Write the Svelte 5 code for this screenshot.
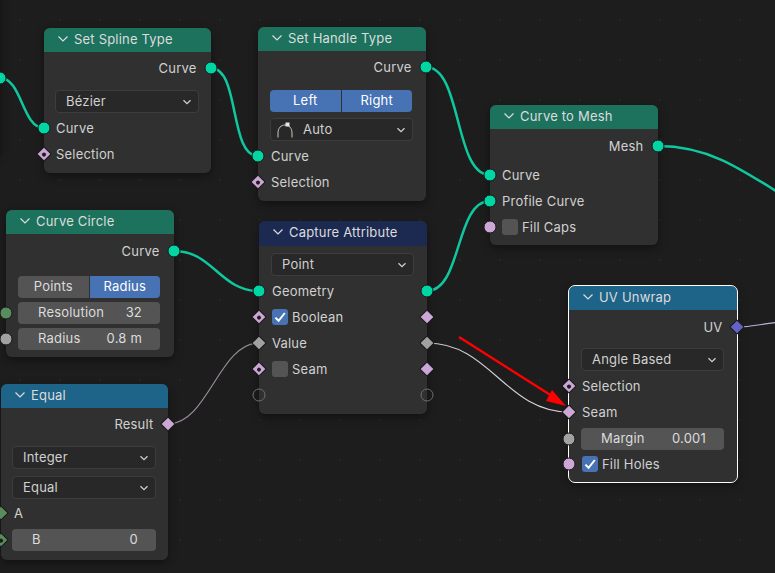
{#snippet sock(kind, side)}
	<span class="sock {kind} {side}"></span>
{/snippet}
{#snippet head(title)}
	<div class="hdr">
		<svg class="chev" viewBox="0 0 12 8"><path d="M1.5 1.5 L6 6 L10.5 1.5" /></svg>
		<span>{title}</span>
	</div>
{/snippet}
{#snippet drop(label)}
	<div class="drop">
		<span>{label}</span>
		<svg class="dchev" viewBox="0 0 10 6"><path d="M1.5 1.2 L5 4.6 L8.5 1.2" /></svg>
	</div>
{/snippet}
{#snippet tick()}
	<span class="check on"><svg viewBox="0 0 16 16"><path d="M3.4 8.6 L6.6 11.8 L12.8 4" /></svg></span>
{/snippet}

<div class="canvas">
	<svg class="wires" viewBox="0 0 775 573">
		<defs>
			<linearGradient id="g1" gradientUnits="userSpaceOnUse" x1="168" y1="424" x2="259" y2="343">
				<stop offset="0" stop-color="#a88eb0" />
				<stop offset="1" stop-color="#8a8a8a" />
			</linearGradient>
			<linearGradient id="g2" gradientUnits="userSpaceOnUse" x1="427" y1="343" x2="569" y2="412">
				<stop offset="0" stop-color="#c8c8c8" />
				<stop offset="1" stop-color="#d8d0dc" />
			</linearGradient>
		</defs>
		<g class="teal">
			<path d="M0 78 C 22 78, 22 128, 44 128" />
			<path d="M211 68 C 240 68, 229 156, 258 156" />
			<path d="M426 67 C 462 67, 454 175, 490 175" />
			<path d="M174 251 C 213 251, 220 291, 259 291" />
			<path d="M427 291 C 462 291, 455 201, 490 201" />
			<path d="M658 146 C 708 146, 740 168, 790 200" />
		</g>
		<path class="thin" stroke="url(#g1)" d="M168 424 C 208 424, 219 343, 259 343" />
		<path class="thin" stroke="url(#g2)" d="M427 343 C 490 343, 506 412, 569 412" />
		<path class="thin" stroke="#b8b4dc" d="M737 327 C 750 327, 762 324, 780 322" />
	</svg>

	<div class="node off">
		<div class="offspace"></div>
		<div class="row">{@render sock('geo', 'r')}</div>
	</div>

	<div class="node spline">
		{@render head('Set Spline Type')}
		<div class="body tight">
			<div class="row out">Curve{@render sock('geo', 'r')}</div>
			<div class="space9"></div>
			{@render drop('Bézier')}
			<div class="space2"></div>
			<div class="row">{@render sock('geo', 'l')}Curve</div>
			<div class="row">{@render sock('dia dot', 'l')}Selection</div>
		</div>
	</div>

	<div class="node handle">
		{@render head('Set Handle Type')}
		<div class="body tight">
			<div class="row out">Curve{@render sock('geo', 'r')}</div>
			<div class="space10"></div>
			<div class="seg">
				<span class="blue">Left</span>
				<span class="blue">Right</span>
			</div>
			<div class="space6"></div>
			<div class="drop">
				<svg class="auto" viewBox="0 0 18 16"><path d="M2 15.5 V11 C2 6 5 3 9 3 C13 3 16 6 16 11 V15.5" /><rect x="9.5" y="0.5" width="4" height="4" /></svg>
				<span>Auto</span>
				<svg class="dchev" viewBox="0 0 10 6"><path d="M1.5 1.2 L5 4.6 L8.5 1.2" /></svg>
			</div>
			<div class="space2"></div>
			<div class="row">{@render sock('geo', 'l')}Curve</div>
			<div class="row">{@render sock('dia dot', 'l')}Selection</div>
		</div>
	</div>

	<div class="node circle">
		{@render head('Curve Circle')}
		<div class="body">
			<div class="row out">Curve{@render sock('geo', 'r')}</div>
			<div class="space12"></div>
			<div class="seg">
				<span class="grey">Points</span>
				<span class="blue">Radius</span>
			</div>
			<div class="space4"></div>
			<div class="num">{@render sock('int', 'wl')}<span>Resolution</span><span>32</span></div>
			<div class="space4"></div>
			<div class="num">{@render sock('val', 'wl')}<span>Radius</span><span>0.8 m</span></div>
		</div>
	</div>

	<div class="node capture">
		{@render head('Capture Attribute')}
		<div class="body top7">
			{@render drop('Point')}
			<div class="space2"></div>
			<div class="row">{@render sock('geo', 'l')}Geometry{@render sock('geo', 'r')}</div>
			<div class="row">{@render sock('dia dot', 'l')}<span class="check on"><svg viewBox="0 0 16 16"><path d="M3.4 8.6 L6.6 11.8 L12.8 4" /></svg></span>Boolean{@render sock('dia', 'r')}</div>
			<div class="row">{@render sock('grey', 'l')}Value{@render sock('grey', 'r')}</div>
			<div class="row">{@render sock('dia dot', 'l')}<span class="check"></span>Seam{@render sock('dia', 'r')}</div>
			<div class="row">{@render sock('ring', 'l')}{@render sock('ring', 'r')}</div>
		</div>
	</div>

	<div class="node mesh">
		{@render head('Curve to Mesh')}
		<div class="body">
			<div class="row out">Mesh{@render sock('geo', 'r')}</div>
			<div class="space3"></div>
			<div class="row">{@render sock('geo', 'l')}Curve</div>
			<div class="row">{@render sock('geo', 'l')}Profile Curve</div>
			<div class="row">{@render sock('bool', 'l')}<span class="check"></span>Fill Caps</div>
		</div>
	</div>

	<div class="node uv">
		{@render head('UV Unwrap')}
		<div class="body">
			<div class="row out">UV{@render sock('vec', 'r')}</div>
			<div class="space8"></div>
			{@render drop('Angle Based')}
			<div class="space2"></div>
			<div class="row">{@render sock('dia dot', 'l')}Selection</div>
			<div class="row">{@render sock('dia', 'l')}Seam</div>
			<div class="space3"></div>
			<div class="num">{@render sock('val', 'wl')}<span>Margin</span><span>0.001</span></div>
			<div class="space1"></div>
			<div class="row">{@render sock('bool', 'l')}{@render tick()}Fill Holes</div>
		</div>
	</div>

	<div class="node equal">
		{@render head('Equal')}
		<div class="body tight">
			<div class="row out">Result{@render sock('dia', 'r')}</div>
			<div class="space9"></div>
			{@render drop('Integer')}
			<div class="space7"></div>
			{@render drop('Equal')}
			<div class="space1"></div>
			<div class="row">{@render sock('idia', 'l')}A</div>
			<div class="space3"></div>
			<div class="num">{@render sock('idia dot', 'wl')}<span>B</span><span>0</span></div>
		</div>
	</div>

	<svg class="arrow" viewBox="0 0 775 573">
		<path class="shaft" d="M459 337 L552 396" />
		<path class="headp" d="M566 406 L552 390 L546 401 Z" />
	</svg>
</div>

<style>
	:global(body) {
		margin: 0;
		background: #1d1d1d;
	}
	.canvas {
		position: relative;
		width: 775px;
		height: 573px;
		overflow: hidden;
		background-color: #1d1d1d;
		background-image: radial-gradient(circle, #262626 0.8px, transparent 1px);
		background-size: 40px 40px;
		font-family: Inter, "Noto Sans", sans-serif;
		font-size: 13px;
		letter-spacing: 0.2px;
		color: #d0d0d0;
	}
	.wires, .arrow {
		position: absolute;
		left: 0;
		top: 0;
		width: 775px;
		height: 573px;
		fill: none;
	}
	.wires { z-index: 0; }
	.arrow { z-index: 5; }
	.teal path {
		stroke: #0fc89f;
		stroke-width: 2.5;
		fill: none;
	}
	.thin { stroke-width: 1.15; fill: none; }
	.shaft { stroke: #f00; stroke-width: 2.4; }
	.headp { fill: #f00; }

	.node {
		position: absolute;
		z-index: 1;
		width: 168px;
		background: #303030;
		border-radius: 6px;
		box-shadow: 0 3px 8px rgba(0, 0, 0, 0.4);
	}
	.off { left: -168px; top: -20px; height: 175px; }
	.offspace { height: 85px; }
	.spline { left: 44px; top: 28px; width: 167px; height: 145px; }
	.handle { left: 258px; top: 27px; height: 174px; }
	.circle { left: 6px; top: 210px; height: 147px; }
	.capture { left: 259px; top: 221px; height: 193px; }
	.mesh { left: 490px; top: 105px; height: 140px; }
	.uv { left: 569px; top: 286px; height: 196px; outline: 1px solid #fff; }
	.equal { left: 1px; top: 384px; width: 167px; height: 176px; }

	.hdr {
		display: flex;
		align-items: center;
		gap: 5px;
		box-sizing: border-box;
		height: 24px;
		padding: 0 0 2px 13px;
		border-radius: 6px 6px 0 0;
		background: #1d725e;
		color: #dcdcdc;
	}
	.capture .hdr { background: #1c2a52; height: 25px; padding-bottom: 3px; }
	.uv .hdr, .equal .hdr { background: #1e6388; }
	.chev {
		width: 12px;
		height: 8px;
		fill: none;
		stroke: #dcdcdc;
		stroke-width: 1.2;
	}
	.body {
		display: flex;
		flex-direction: column;
		padding-top: 4px;
	}
	.tight { padding-top: 3px; }
	.top7 { padding-top: 7px; }
	.space1 { height: 1px; }
	.space2 { height: 2px; }
	.space3 { height: 3px; }
	.space4 { height: 4px; }
	.space6 { height: 6px; }
	.space7 { height: 7px; }
	.space8 { height: 8px; }
	.space9 { height: 9px; }
	.space10 { height: 10px; }
	.space12 { height: 12px; }

	.row {
		position: relative;
		display: flex;
		align-items: center;
		height: 26px;
		padding: 0 14.5px 0 13px;
	}
	.spline .row, .mesh .row { padding-left: 12px; }
	.out { justify-content: flex-end; }
	.check {
		flex: none;
		width: 16px;
		height: 16px;
		margin-right: 4px;
		border-radius: 3px;
		background: #545454;
	}
	.check.on { background: #4772b3; }
	.check svg {
		display: block;
		width: 16px;
		height: 16px;
		fill: none;
		stroke: #fff;
		stroke-width: 2;
	}

	.drop {
		display: flex;
		align-items: center;
		height: 23px;
		box-sizing: border-box;
		margin: 0 13px 0 12px;
		padding: 0 6px 2px 10px;
		background: #282828;
		border: 1px solid #3d3d3d;
		border-radius: 4px;
	}
	.spline .drop, .equal .drop { margin: 0 12px 0 11px; }
	.drop span { flex: 1; }
	.dchev {
		width: 10px;
		height: 6px;
		margin-top: 2px;
		fill: none;
		stroke: #d0d0d0;
		stroke-width: 1.3;
	}
	.auto {
		flex: none;
		width: 18px;
		height: 16px;
		margin: 2px 9px 0 -5px;
		fill: none;
		stroke: #c8c8c8;
		stroke-width: 1;
	}
	.auto rect { fill: #e8e8e8; stroke: none; }

	.seg {
		display: flex;
		gap: 1px;
		height: 22px;
		margin: 0 14px 0 12px;
		border-radius: 4px;
		overflow: hidden;
		text-align: center;
		line-height: 20px;
	}
	.seg span { flex: 1; }
	.blue { background: #4772b3; color: #fff; }
	.grey { background: #545454; color: #dcdcdc; }

	.num {
		position: relative;
		display: flex;
		justify-content: space-between;
		align-items: center;
		box-sizing: border-box;
		height: 22px;
		margin: 0 13px 0 12px;
		padding: 0 18px 2px 20px;
		background: #545454;
		border-radius: 4px;
		color: #dcdcdc;
	}
	.circle .num { margin-right: 14px; }
	.equal .num { margin: 0 12px 0 11px; }

	.sock {
		position: absolute;
		top: 50%;
		box-sizing: border-box;
		transform: translate(-50%, -50%);
		width: 13px;
		height: 13px;
		border-radius: 50%;
		border: 1px solid #1a1a1a;
	}
	.sock.l { left: 0; }
	.sock.r { left: 100%; }
	.sock.wl { left: -12px; top: 11px; }
	.equal .sock.wl { left: -11px; }
	.geo { background: #00d6a3; }
	.int { background: #598c5c; }
	.val { background: #a1a1a1; }
	.bool { background: #cca6d6; }
	.ring {
		background: transparent;
		border: 1.5px solid #6e6e6e;
	}
	.dia, .sock.grey, .idia, .vec {
		width: 11px;
		height: 11px;
		border-radius: 1px;
		transform: translate(-50%, -50%) rotate(45deg);
	}
	.dia { background: #cca6d6; }
	.sock.grey { background: #a1a1a1; }
	.idia { background: #598c5c; }
	.vec { background: #6363c7; }
	.dot::after {
		content: "";
		position: absolute;
		left: 50%;
		top: 50%;
		width: 4px;
		height: 4px;
		border-radius: 50%;
		background: #1d1d1d;
		transform: translate(-50%, -50%);
	}
</style>
